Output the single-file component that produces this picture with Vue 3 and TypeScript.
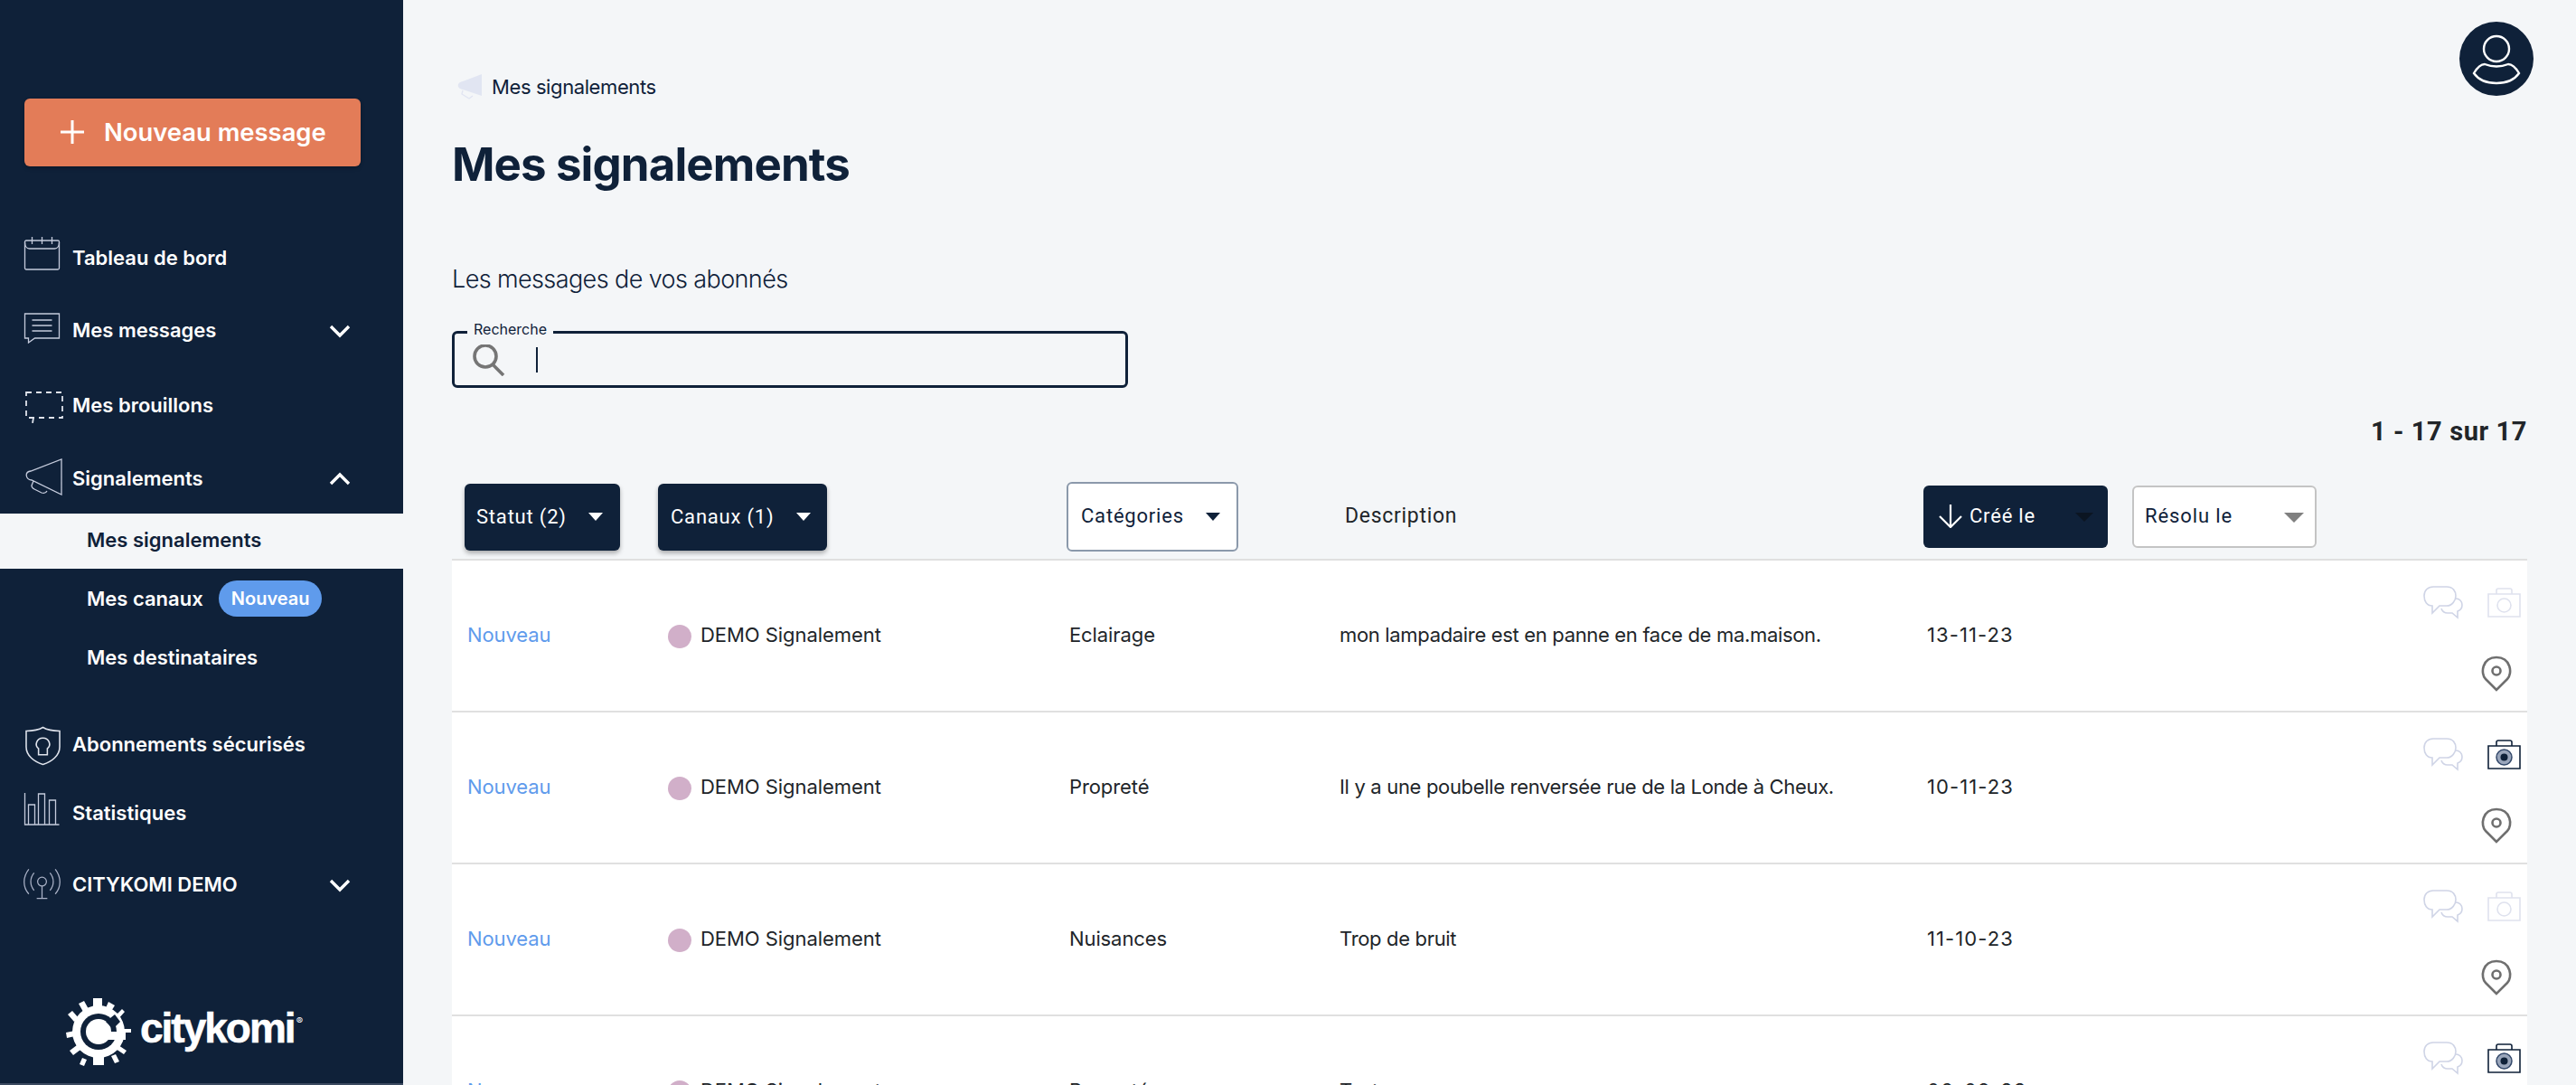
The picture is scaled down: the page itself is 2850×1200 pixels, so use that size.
<script setup lang="ts">
interface Row {
  cat: string
  desc: string
  date: string
  photo: boolean
}
const rows: Row[] = [
  { cat: 'Eclairage', desc: 'mon lampadaire est en panne en face de ma.maison.', date: '13-11-23', photo: false },
  { cat: 'Propreté', desc: 'Il y a une poubelle renversée rue de la Londe à Cheux.', date: '10-11-23', photo: true },
  { cat: 'Nuisances', desc: 'Trop de bruit', date: '11-10-23', photo: false },
  { cat: 'Propreté', desc: 'Test', date: '06-09-23', photo: true },
]
</script>

<template>
  <div class="app">
    <aside class="side">
      <button class="new">
        <svg class="plus" viewBox="0 0 26 26" fill="none" stroke="#fff" stroke-width="3"><path d="M13 0v26M0 13h26"/></svg>
        Nouveau message
      </button>
      <nav class="nav">
        <div class="item">
          <svg class="ic i-cal" viewBox="0 0 40 37" fill="none" stroke="#c5cbdc" stroke-width="1.3"><rect x="1" y="4" width="38" height="32" rx="1.5"/><path d="M1 6c0 4 2 7 5 7h28c3 0 5-3 5-7M9 0v8M20 0v8M31 0v8"/></svg>
          <span>Tableau de bord</span>
        </div>
        <div class="item mm">
          <svg class="ic i-msg" viewBox="0 0 40 34" fill="none" stroke="#c5cbdc" stroke-width="1.3"><path d="M1 1h38v27H12l-7 5v-5H1zM9 8h22M9 14h22M9 20h22"/></svg>
          <span>Mes messages</span>
          <svg class="chev" viewBox="0 0 24 16" fill="none" stroke="#fff" stroke-width="3.4"><path d="M2 3l10 10L22 3"/></svg>
        </div>
        <div class="item mb">
          <svg class="ic i-draft" viewBox="0 0 44 37" fill="none" stroke="#dfe3ec" stroke-width="1.8" stroke-dasharray="6 5"><path d="M2 2h40v28H2zM10 30l-1 6"/></svg>
          <span>Mes brouillons</span>
        </div>
        <div class="item sg">
          <svg class="ic i-mega" viewBox="0 0 43 41" fill="none" stroke="#c5cbdc" stroke-width="1.3"><path d="M41 1v39L8 24c-7-1-8-9-1-10zM10 25l-2 5c0 2 1 3 3 4l8 4c3 1 5 0 6-2"/></svg>
          <span>Signalements</span>
          <svg class="chev" viewBox="0 0 24 16" fill="none" stroke="#fff" stroke-width="3.4"><path d="M2 13L12 3l10 10"/></svg>
        </div>
        <div class="sub active">Mes signalements</div>
        <div class="sub canaux">Mes canaux <span class="pill">Nouveau</span></div>
        <div class="sub dest">Mes destinataires</div>
        <div class="item ab">
          <svg class="ic i-shield" viewBox="0 0 40 44" fill="none" stroke="#dfe3ec" stroke-width="1.6"><path d="M20 1c5 3 12 4 19 4v18c0 10-9 17-19 20C10 40 1 33 1 23V5c7 0 14-1 19-4z"/><path d="M15 32v-7c-5-4-2-12 5-12s10 8 5 12v7z"/></svg>
          <span>Abonnements sécurisés</span>
        </div>
        <div class="item st">
          <svg class="ic i-stat" viewBox="0 0 40 36" fill="none" stroke="#c5cbdc" stroke-width="1.3"><path d="M1 0v35h38M5 35V13h7v22M16 35V1h7v34M28 35V8h7v27"/></svg>
          <span>Statistiques</span>
        </div>
        <div class="item ck">
          <svg class="ic i-ant" viewBox="0 0 42 35" fill="none" stroke="#a9b1c6" stroke-width="1.3"><circle cx="21" cy="15" r="5"/><path d="M21 20v14M15 34h12M12 5c-5 6-5 14 0 20M30 5c5 6 5 14 0 20M6 1c-7 9-7 20 0 28M36 1c7 9 7 20 0 28"/></svg>
          <span>CITYKOMI DEMO</span>
          <svg class="chev" viewBox="0 0 24 16" fill="none" stroke="#fff" stroke-width="3.4"><path d="M2 3l10 10L22 3"/></svg>
        </div>
      </nav>
      <div class="logo">
        <svg class="gear" viewBox="0 0 72 78"><circle cx="36" cy="39" r="29" fill="#fff"/><path d="M30 2h10v10H30zM14 8l6-3 5 9-6 3zM47 6l7 4-5 8-6-3zM2 20l5-4 7 8-5 4zM62 14l3 3-8 9-4-3zM0 40l10-2v6l-9 2zM64 36h8v4h-8zM4 60l8-6 4 5-8 6zM58 54l9 6-3 4-9-6zM18 68l5 2-3 7-5-2zM30 66h12v10H30zM50 66l5-2 4 8-5 2z" fill="#fff"/><circle cx="36" cy="39" r="20" fill="#0f2139"/><circle cx="36" cy="39" r="14" fill="#fff"/><path d="M44 39h22v9H44z" fill="#fff"/><path d="M44 28l10-8 6 8-8 8z" fill="#0f2139"/></svg>
        <span class="word">citykomi</span><span class="reg">®</span>
      </div>
    </aside>
    <main class="main">
      <svg class="avatar" viewBox="0 0 82 82"><circle cx="41" cy="41" r="41" fill="#0f2139"/><g fill="none" stroke="#fff" stroke-width="2.4"><circle cx="41" cy="30" r="14"/><path d="M28 47c8 3 18 3 26 0 5 0 9 5 12 10-5 7-14 11-25 11s-20-4-25-11c3-5 7-10 12-10z"/></g></svg>
      <div class="crumb">
        <svg class="crumb-ic" viewBox="0 0 30 28"><path d="M29 0v24L8 17c-7-1-7-8 0-9z" fill="#e1e5f2"/><path d="M8 18l-1 4 8 5 4-3" fill="none" stroke="#e1e5f2" stroke-width="1.4"/></svg>
        <span>Mes signalements</span>
      </div>
      <h1>Mes signalements</h1>
      <p class="lead">Les messages de vos abonnés</p>
      <div class="search">
        <span class="lbl">Recherche</span>
        <svg class="mag" viewBox="0 0 36 35" fill="none" stroke="#757575" stroke-width="3.600"><circle cx="14" cy="13" r="12"/><path d="M22 22l12 12"/></svg>
        <span class="caret"></span>
      </div>
      <div class="count">1 - 17 sur 17</div>
      <div class="heads">
        <div class="fbtn dark st1">Statut (2)<i class="tri w"></i></div>
        <div class="fbtn dark st2">Canaux (1)<i class="tri w"></i></div>
        <div class="fbtn light st3">Catégories<i class="tri n"></i></div>
        <div class="hd">Description</div>
        <div class="fbtn dark st4"><svg class="arrow" viewBox="0 0 26 26" fill="none" stroke="#fff" stroke-width="2.2"><path d="M13 0v25M1 13l12 12 12-12"/></svg>Créé le<i class="tri k"></i></div>
        <div class="fbtn light2 st5">Résolu le<i class="tri g"></i></div>
      </div>
      <div class="table">
        <div v-for="r in rows" :key="r.date" class="row">
          <div class="c status">Nouveau</div>
          <div class="c chan"><i class="dot"></i>DEMO Signalement</div>
          <div class="c cat">{{ r.cat }}</div>
          <div class="c desc">{{ r.desc }}</div>
          <div class="c date">{{ r.date }}</div>
          <div class="icons">
            <div class="ir">
              <svg class="chat" viewBox="0 0 44 37" fill="none" stroke="#cfd4e6" stroke-width="1.6"><path d="M11 1h15c7 0 10 5 10 10s-4 11-10 11H18l-8 8v-8C4 22 1 17 1 11S5 1 11 1z"/><path d="M36 14c4 0 7 3 7 7s-2 6-5 7v7l-6-5h-5c-3 0-6-2-7-5"/></svg>
              <svg v-if="r.photo" class="cam" viewBox="0 0 37 33" fill="none"><path d="M1 7h35v25H1z" stroke="#0f2139" stroke-width="1.6"/><path d="M10 7V3c0-1 1-2 2-2h13c1 0 2 1 2 2v4" stroke="#0f2139" stroke-width="1.6"/><circle cx="18.500" cy="19.500" r="8.500" fill="#9aa6bb" stroke="#33486a" stroke-width="1.500"/><circle cx="18.500" cy="19.500" r="4" fill="#0f2139"/></svg>
              <svg v-else class="cam" viewBox="0 0 37 33" fill="none" stroke="#dfe2ee" stroke-width="1.6"><path d="M1 7h35v25H1z"/><path d="M10 7V3c0-1 1-2 2-2h13c1 0 2 1 2 2v4"/><circle cx="18.500" cy="19.500" r="7.500"/></svg>
            </div>
            <svg class="pin" viewBox="0 0 34 40" fill="none" stroke="#6f6f6f" stroke-width="2.6"><path d="M17 38L5 26C-1 20 1 2 17 2s18 18 12 24z"/><circle cx="17" cy="17" r="4.500"/></svg>
          </div>
        </div>
      </div>
    </main>
  </div>
</template>

<style scoped>
.app {
  display: flex;
  width: 2850px;
  height: 1200px;
  overflow: hidden;
  background: #f4f6f8;
  font-family: Inter, "Liberation Sans", sans-serif;
  color: #0f2139;
}
.side {
  width: 446px;
  flex: none;
  height: 1200px;
  background: #0f2139;
  border-bottom: 2px solid #3b4a60;
  box-sizing: border-box;
  padding-top: 109px;
  display: flex;
  flex-direction: column;
}
.new {
  width: 372px;
  height: 75px;
  margin-left: 27px;
  flex: none;
  border: 0;
  border-radius: 6px;
  background: #e37c58;
  color: #fff;
  font: 600 27.4px Inter, sans-serif;
  display: flex;
  align-items: center;
  padding: 0 0 2px 40px;
  box-shadow: 0 2px 4px rgba(0, 0, 0, .25);
}
.plus { width: 26px; height: 26px; margin-right: 22px; flex: none; }
.nav { margin-top: 82px; }
.item {
  height: 40px;
  box-sizing: border-box;
  padding: 0 0 2px 26px;
  display: flex;
  align-items: center;
  color: #fff;
  font-size: 22px;
  font-weight: 600;
  position: relative;
}
.ic { width: 41px; height: 37px; flex: none; margin-right: 13px; }
.i-cal { margin-top: -10px; }
.i-msg { height: 34px; margin-top: -4px; }
.i-draft { width: 44px; margin-left: 1px; margin-right: 9px; margin-top: 4px; }
.i-mega { width: 43px; height: 41px; margin-left: 1px; margin-right: 10px; margin-top: -4px; }
.i-shield { width: 39px; height: 44px; margin-left: 2px; margin-right: 13px; margin-top: 4px; }
.i-stat { width: 41px; height: 36px; margin-top: -8px; }
.i-ant { height: 35px; margin-top: -2px; }
.chev { position: absolute; left: 364px; top: 12px; width: 24px; height: 16px; }
.mm { margin-top: 40px; }
.mb { margin-top: 43px; }
.sg { margin-top: 41px; }
.sub {
  height: 61px;
  box-sizing: border-box;
  padding: 0 0 3px 96px;
  display: flex;
  align-items: center;
  color: #fff;
  font-size: 22px;
  font-weight: 600;
}
.active { background: #f4f6f8; color: #0f2139; margin-top: 18px; }
.canaux { height: 68px; white-space: pre; }
.pill {
  margin-left: 12px;
  background: #5f9bec;
  border-radius: 20px;
  height: 40px;
  width: 114px;
  display: flex;
  align-items: center;
  justify-content: center;
  font-size: 20px;
}
.dest { height: 62px; }
.ab { margin-top: 45px; }
.st { margin-top: 36px; }
.ck { margin-top: 39px; }
.logo {
  margin-top: auto;
  margin-left: 73px;
  margin-bottom: 18px;
  display: flex;
  align-items: center;
  color: #fff;
}
.gear { width: 72px; height: 78px; }
.word {
  font: 700 46px "Liberation Sans", sans-serif;
  letter-spacing: -2px;
  margin-left: 10px;
  margin-top: -8px;
  -webkit-text-stroke: .6px #fff;
}
.reg { font-size: 11px; margin-top: -24px; margin-left: 2px; }
.main {
  position: relative;
  flex: 1;
  box-sizing: border-box;
  padding: 0 54px;
}
.avatar { position: absolute; left: 2275px; top: 24px; width: 82px; height: 82px; }
.crumb {
  position: absolute;
  left: 58px;
  top: 82px;
  display: flex;
  align-items: center;
  gap: 10px;
  font-size: 22px;
  letter-spacing: -.4px;
}
.crumb-ic { width: 30px; height: 28px; }
h1 {
  margin: 0;
  padding-top: 146px;
  font-size: 51px;
  line-height: 72px;
  font-weight: 700;
  letter-spacing: -.9px;
}
.lead {
  margin: 71px 0 0;
  font-size: 27px;
  font-weight: 300;
  line-height: 40px;
  letter-spacing: -.6px;
}
.search {
  position: relative;
  width: 748px;
  height: 63px;
  margin-top: 37px;
  box-sizing: border-box;
  border: 3px solid #0f2139;
  border-radius: 6px;
}
.lbl {
  position: absolute;
  left: 14px;
  top: -15px;
  padding: 0 7px;
  background: #f4f6f8;
  font-size: 16px;
  line-height: 20px;
}
.mag { position: absolute; left: 20px; top: 12px; width: 36px; height: 35px; }
.caret { position: absolute; left: 90px; top: 15px; width: 2px; height: 28px; background: #0f2139; }
.count {
  margin-top: 30px;
  text-align: right;
  font: 700 29px/36px Roboto, sans-serif;
  letter-spacing: .6px;
  color: #212529;
}
.heads { position: relative; height: 93px; margin-top: 30px; }
.fbtn {
  position: absolute;
  box-sizing: border-box;
  display: flex;
  align-items: center;
  padding-bottom: 2px;
  font: 400 22px Roboto, sans-serif;
  letter-spacing: .8px;
  border-radius: 6px;
}
.dark { background: #0f2139; color: #fff; box-shadow: 0 3px 5px rgba(0, 0, 0, .3); }
.light { background: #fff; border: 2px solid #8b99ab; color: #0f2139; }
.light2 { background: #fff; border: 2px solid #c4c4c4; color: #0f2139; letter-spacing: .9px; }
.st1 { left: 14px; top: 10px; width: 172px; height: 74px; padding-left: 13px; }
.st2 { left: 228px; top: 10px; width: 187px; height: 74px; padding-left: 14px; }
.st3 { left: 680px; top: 8px; width: 190px; height: 77px; padding-left: 14px; }
.hd { position: absolute; left: 988px; top: 32px; font: 400 23px Roboto, sans-serif; letter-spacing: .7px; color: #212529; }
.st4 { left: 1628px; top: 12px; width: 204px; height: 69px; padding-left: 17px; letter-spacing: .8px; box-shadow: none; }
.st5 { left: 1859px; top: 12px; width: 204px; height: 69px; padding-left: 12px; }
.arrow { width: 26px; height: 26px; margin-right: 8px; }
.tri { position: absolute; width: 0; height: 0; border-left: 8px solid transparent; border-right: 8px solid transparent; top: 50%; margin-top: -5px; }
.tri.w { border-top: 9px solid #fff; right: 19px; }
.st2 .tri.w { right: 18px; }
.tri.n { border-top: 9px solid #0f2139; right: 18px; }
.tri.k { border-top: 10px solid #0b1522; border-left-width: 10px; border-right-width: 10px; right: 16px; }
.tri.g { border-top: 11px solid #808080; border-left-width: 11px; border-right-width: 11px; right: 12px; }
.table { border-top: 2px solid #e0e0e0; }
.row {
  position: relative;
  height: 166px;
  background: #fff;
  border-bottom: 2px solid #e0e0e0;
  color: #212529;
  font-size: 22px;
}
.c { position: absolute; top: 67px; line-height: 30px; letter-spacing: -.1px; }
.status { left: 17px; color: #5f9bec; }
.chan { left: 239px; display: flex; align-items: center; letter-spacing: -.05px; }
.dot { width: 26px; height: 26px; border-radius: 50%; background: #d1afc9; margin-right: 10px; margin-top: 4px; }
.cat { left: 683px; }
.desc { left: 982px; letter-spacing: -.33px; }
.date { left: 1632px; letter-spacing: 1.100px; }
.icons { position: absolute; right: 7px; top: 28px; display: flex; flex-direction: column; align-items: flex-end; }
.ir { display: flex; align-items: center; gap: 27px; }
.chat { width: 44px; height: 37px; }
.cam { width: 37px; height: 33px; }
.pin { width: 34px; height: 40px; margin-top: 40px; margin-right: 10px; }
</style>

<style>
html, body { margin: 0; background: #f4f6f8; }
</style>
